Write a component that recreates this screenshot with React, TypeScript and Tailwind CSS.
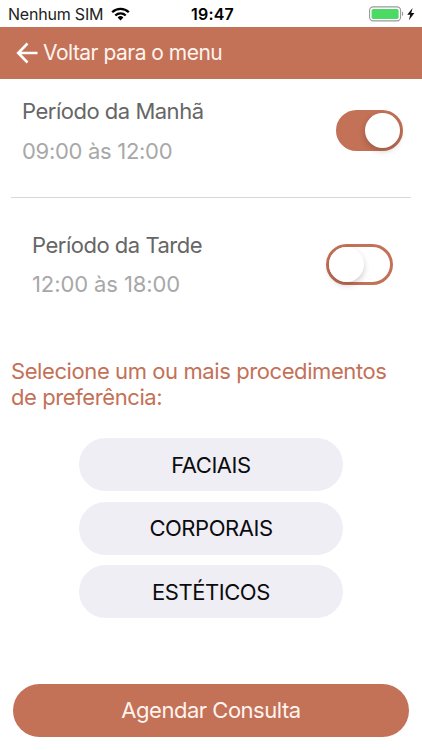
import { useState } from "react";

const procedures = ["FACIAIS", "CORPORAIS", "ESTÉTICOS"];

const StatusBar = () => {
  return (
    <div className="grid grid-cols-3 items-center h-[27px] pl-2 pr-[5px] text-black">
      <div className="flex items-center">
        <span className="text-[16px] leading-none whitespace-nowrap tracking-[-0.2px] text-[#222]">Nenhum SIM</span>
        <svg className="ml-2 shrink-0" width="19" height="14" viewBox="0 0 19 14" fill="none" stroke="currentColor" strokeWidth="2.3">
          <path d="M1.2 5.3A11.8 11.8 0 0 1 17.8 5.3" />
          <path d="M4.3 8.5A7.4 7.4 0 0 1 14.7 8.5" />
          <path d="M9.5 13.4 6.6 10.5A4.1 4.1 0 0 1 12.4 10.5Z" fill="currentColor" stroke="none" />
        </svg>
      </div>
      <span className="text-center text-[16px] leading-none font-semibold tracking-[0.2px]">19:47</span>
      <div className="flex items-center justify-end">
        <svg className="mr-[1.5px]" width="46" height="16" viewBox="0 0 46 16">
          <rect x="0.6" y="0.9" width="31" height="14" rx="3.6" fill="white" stroke="#999" strokeWidth="1.1" />
          <rect x="2.6" y="2.9" width="27" height="10" rx="1.6" fill="#4cd964" />
          <path d="M33 5.6c1.6.6 1.6 4 0 4.6z" fill="#999" />
          <path d="M43.6 2 38.2 8.8h3l-1.3 5.4 5.5-7.1h-3.1z" fill="#111" />
        </svg>
      </div>
    </div>
  );
};

const Toggle = ({ on, onChange }: { on: boolean; onChange: () => void }) => {
  return (
    <button
      role="switch"
      aria-checked={on}
      onClick={onChange}
      className={`flex items-center w-[67px] h-[41px] rounded-full border-3 border-[#c37157] ${
        on ? "justify-end bg-[#c37157]" : "justify-start bg-white"
      }`}
    >
      <span className="size-[35.5px] shrink-0 rounded-full bg-white shadow-[0_3px_6px_rgba(0,0,0,0.2)]" />
    </button>
  );
};

const App = () => {
  const [morning, setMorning] = useState(true);
  const [afternoon, setAfternoon] = useState(false);

  return (
    <div className="flex flex-col w-full h-[750px] overflow-hidden bg-white font-['Inter','Liberation_Sans',sans-serif] text-[22px] leading-[26px]">
      <StatusBar />
      <header className="flex items-center h-[52px] pl-4 bg-[#c37157] text-[#fff4ee]">
        <svg width="22" height="22" viewBox="0 0 22 22" fill="none" stroke="white" strokeWidth="2.6">
          <path d="M21.5 11H2.5M11.5 1.5 2.2 11l9.3 9.5" />
        </svg>
        <span className="ml-[5px] text-[21px] tracking-[-0.51px]">Voltar para o menu</span>
      </header>

      <section className="flex justify-between mx-[11px] h-[119px] pl-[11px] pr-2 pt-[19px] border-b border-[#d8d8d8]">
        <div>
          <h2 className="tracking-[-0.49px] text-[#666]">Período da Manhã</h2>
          <p className="mt-[14px] tracking-[-0.3px] text-[#a8a8a8]">09:00 às 12:00</p>
        </div>
        <div className="pt-[12px]">
          <Toggle on={morning} onChange={() => setMorning(!morning)} />
        </div>
      </section>

      <section className="flex justify-between h-[160px] pl-8 pr-[29.5px] pt-[34px]">
        <div>
          <h2 className="tracking-[-0.49px] text-[#666]">Período da Tarde</h2>
          <p className="mt-[13px] tracking-[-0.1px] text-[#a8a8a8]">12:00 às 18:00</p>
        </div>
        <div className="pt-[12px]">
          <Toggle on={afternoon} onChange={() => setAfternoon(!afternoon)} />
        </div>
      </section>

      <p className="pl-[11px] tracking-[-0.41px] text-[#c37157]">
        Selecione um ou mais procedimentos
        <br />
        de preferência:
      </p>

      <div className="flex flex-col items-center gap-[10.5px] mt-7 text-[#0c0c0e]">
        {procedures.map((name) => (
          <button key={name} className="w-[264px] h-[53px] rounded-full bg-[#efeef5] tracking-[-0.45px]">
            {name}
          </button>
        ))}
      </div>

      <button className="mt-auto mb-[13.5px] mx-[13px] h-[53px] shrink-0 rounded-full bg-[#c37157] text-[#fff4ee] tracking-[-0.48px]">
        Agendar Consulta
      </button>
    </div>
  );
};

export default App;
